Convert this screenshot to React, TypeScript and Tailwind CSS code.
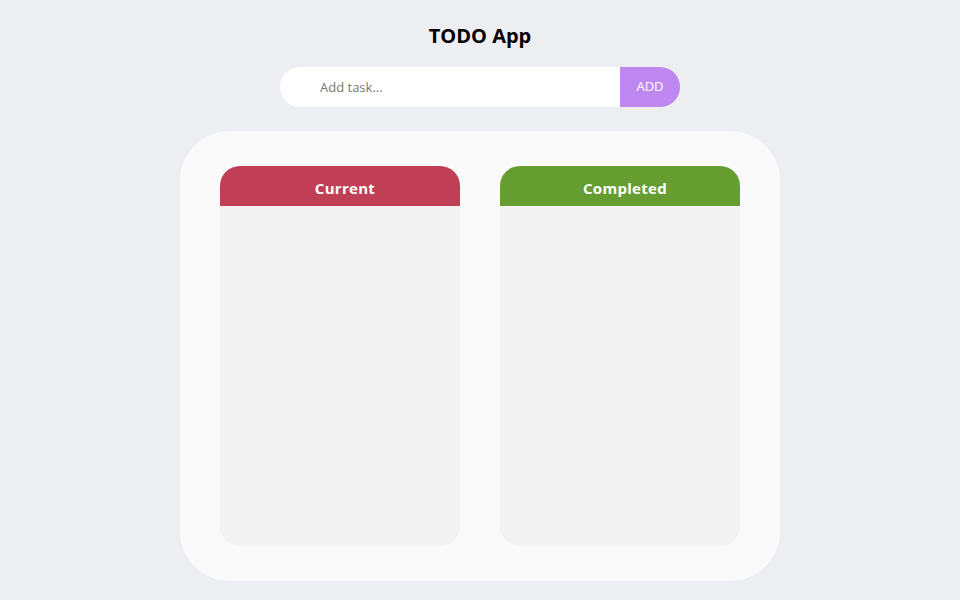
import React, { useState } from "react";

interface ColumnProps {
  title: string;
  color: string;
}

// Column card with colored header
const Column: React.FC<ColumnProps> = ({ title, color }) => {
  return (
    <div className="w-[240px] h-[380px] flex flex-col rounded-[20px] bg-[#f3f3f4] overflow-hidden">
      <div className={`h-[40px] flex items-center justify-center pl-[10px] pt-[4px] text-white font-bold text-[15px] tracking-[0.3px] ${color}`}>
        {title}
      </div>
      <div className="flex-1"></div>
    </div>
  );
};

const App: React.FC = () => {
  const [task, setTask] = useState("");

  return (
    <div
      className="min-h-screen bg-[#edeef2] flex flex-col items-center"
      style={{ fontFamily: '"Open Sans", sans-serif' }}
    >
      <h1 className="mt-[20px] text-[20px] leading-[32px] font-bold text-black">TODO App</h1>

      <div className="mt-[15px] flex w-[400px] h-[40px]">
        <input
          value={task}
          onChange={(e) => setTask(e.target.value)}
          placeholder="Add task..."
          className="flex-1 h-full bg-white rounded-l-full pl-[40px] text-[13px] text-gray-700 placeholder:text-[#777] outline-none"
        />
        <button className="w-[60px] h-full bg-[#bf87f0] text-white text-[13px] rounded-r-full">ADD</button>
      </div>

      <div className="mt-[24px] w-[600px] h-[450px] rounded-[50px] bg-[#fafafa] flex justify-between px-[40px] pt-[35px]">
        <Column title="Current" color="bg-[#c13f56]" />
        <Column title="Completed" color="bg-[#659d30]" />
      </div>
    </div>
  );
};

export default App;
